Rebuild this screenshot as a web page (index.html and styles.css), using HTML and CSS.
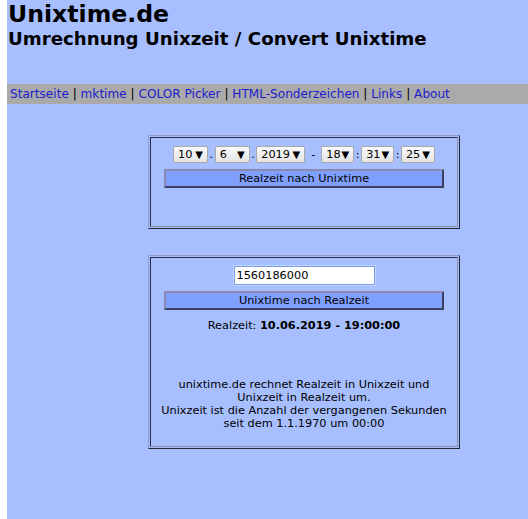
FILE: index.html
```html
<!DOCTYPE html>
<html lang="de">
<head>
<meta charset="utf-8">
<title>Unixtime.de</title>
<link rel="stylesheet" href="styles.css">
</head>
<body>
<div class="page">
  <h1 class="title">Unixtime.de</h1>
  <h2 class="subtitle">Umrechnung Unixzeit / Convert Unixtime</h2>
  <nav class="nav">
    <a href="#">Startseite</a> | <a href="#">mktime</a> | <a href="#">COLOR Picker</a> | <a href="#">HTML-Sonderzeichen</a> | <a href="#">Links</a> | <a href="#">About</a>
  </nav>

  <div class="box box-one">
    <div class="cell">
      <div class="row">
        <span class="sel w35"><span class="val">10</span><span class="arr">▼</span></span><span class="sep">.</span><span class="sel w35"><span class="val">6</span><span class="arr">▼</span></span><span class="sep">.</span><span class="sel w49"><span class="val">2019</span><span class="arr">▼</span></span><span class="sep dash">-</span><span class="sel w33"><span class="val">18</span><span class="arr">▼</span></span><span class="sep">:</span><span class="sel w33"><span class="val">31</span><span class="arr">▼</span></span><span class="sep">:</span><span class="sel w34"><span class="val">25</span><span class="arr">▼</span></span>
      </div>
      <button class="btn" type="button">Realzeit nach Unixtime</button>
    </div>
  </div>

  <div class="box box-two">
    <div class="cell">
      <div class="row"><input class="field" type="text" value="1560186000"></div>
      <button class="btn" type="button">Unixtime nach Realzeit</button>
      <p class="result">Realzeit: <b>10.06.2019 - 19:00:00</b></p>
      <p class="info">unixtime.de rechnet Realzeit in Unixzeit und<br>Unixzeit in Realzeit um.<br>Unixzeit ist die Anzahl der vergangenen Sekunden<br>seit dem 1.1.1970 um 00:00</p>
    </div>
  </div>
</div>
</body>
</html>
```

FILE: styles.css
```css
html, body {
  margin: 0;
  padding: 0;
  background: #ffffff;
}
body {
  font-family: "DejaVu Sans", Verdana, sans-serif;
  font-size: 12px;
  color: #000;
}
.page {
  margin-left: 7px;
  background: #a7bfff;
  min-height: 519px;
  padding-top: 1px;
  box-sizing: border-box;
}
.title {
  margin: 0;
  padding-left: 1px;
  font-size: 23.6px;
  line-height: 28px;
  font-weight: bold;
  margin-top: -1px;
}
.subtitle {
  margin: 0;
  padding-left: 1px;
  font-size: 18.2px;
  line-height: 22px;
  font-weight: bold;
}
.nav {
  margin-top: 34px;
  background: #aaaaaa;
  height: 20px;
  line-height: 21px;
  padding-left: 3px;
  font-size: 12.1px;
  color: #000;
}
.nav a {
  color: #1c1ccc;
  text-decoration: none;
}
.box {
  margin-left: 141px;
  width: 312px;
  box-sizing: border-box;
  border: 1px solid;
  border-color: #8f9ac8 #22253a #22253a #8f9ac8;
  padding: 1px;
  font-size: 11.3px;
}
.box-one { margin-top: 31px; }
.box-two { margin-top: 26px; }
.cell {
  border: 1px solid;
  border-color: #2b2e48 #8a8fa8 #8a8fa8 #2b2e48;
  display: flex;
  flex-direction: column;
  align-items: center;
  padding: 8px 0 0;
  box-sizing: border-box;
}
.box-one .cell { height: 90px; }
.box-two .cell { height: 190px; padding-top: 8px; }
.row {
  display: flex;
  align-items: center;
  height: 17px;
}
.sel {
  display: inline-flex;
  align-items: center;
  justify-content: space-between;
  box-sizing: border-box;
  height: 17px;
  border: 1px solid #a9a9a9;
  border-radius: 2px;
  background: linear-gradient(#fafafa, #e4e4e4);
  padding: 0 4px 0 4px;
  font-size: 11.3px;
}
.sel .arr { font-size: 10px; line-height: 10px; }
.w33 { width: 33px; }
.w34 { width: 34px; }
.w35 { width: 35px; }
.w49 { width: 49px; }
.sep { padding: 0 1.5px; }
.dash { padding: 0 6px; }
.btn {
  margin-top: 6px;
  width: 280px;
  height: 19px;
  box-sizing: border-box;
  background: #80a0ff;
  border: 2px solid;
  border-color: #8888b0 #3c3f60 #3c3f60 #8888b0;
  font-family: "DejaVu Sans", Verdana, sans-serif;
  font-size: 11.3px;
  color: #000;
  padding: 0;
}
.field {
  width: 141px;
  height: 19px;
  box-sizing: border-box;
  border: 1px solid #7b9ee8;
  outline: 1px solid #c3d4ff;
  background: #fff;
  padding: 0 2px;
  font-family: "DejaVu Sans", Verdana, sans-serif;
  font-size: 11.3px;
  margin-top: 1px;
}
.box-two .btn { margin-top: 8px; }
.result {
  margin: 9px 0 0;
  line-height: 14px;
}
.info {
  margin: 45px 0 0;
  text-align: center;
  line-height: 13px;
}
```
